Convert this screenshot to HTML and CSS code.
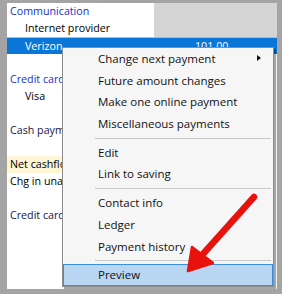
FILE: index.html
```html
<!DOCTYPE html>
<html>
<head>
<meta charset="utf-8">
<link rel="stylesheet" href="styles.css">
</head>
<body>
<div class="frame">
  <div class="window">
    <div class="top">
      <div class="col-left">
        <div class="row cat">Communication</div>
        <div class="row sub">Internet provider</div>
      </div>
      <div class="col-right"></div>
    </div>
    <div class="row selected">
      <span class="sel-name">Verizon</span>
      <span class="sel-amount">101.00</span>
    </div>
    <div class="col-left rest">
      <div class="row"></div>
      <div class="row cat">Credit card</div>
      <div class="row sub">Visa</div>
      <div class="row"></div>
      <div class="row navy">Cash payment</div>
      <div class="row"></div>
      <div class="row total">Net cashflow</div>
      <div class="row plain">Chg in unallocated</div>
      <div class="row"></div>
      <div class="row navy">Credit card</div>
    </div>

    <div class="menu">
      <div class="item">Change next payment<span class="caret"></span></div>
      <div class="item">Future amount changes</div>
      <div class="item">Make one online payment</div>
      <div class="item">Miscellaneous payments</div>
      <div class="sep"></div>
      <div class="item">Edit</div>
      <div class="item">Link to saving</div>
      <div class="sep"></div>
      <div class="item">Contact info</div>
      <div class="item">Ledger</div>
      <div class="item">Payment history</div>
      <div class="sep"></div>
      <div class="item hot">Preview</div>
    </div>
  </div>
  <svg class="annot" width="282" height="294" viewBox="0 0 282 294">
    <line x1="254" y1="197" x2="203" y2="254" stroke="#e8120c" stroke-width="6.5" stroke-linecap="round"/>
    <polygon points="188,271 192,247 213,263" fill="#e8120c" stroke="#e8120c" stroke-width="2.5" stroke-linejoin="round"/>
  </svg>
</div>
</body>
</html>
```
FILE: styles.css
```css
* { box-sizing: border-box; }
html, body { margin: 0; padding: 0; }
body {
  width: 282px;
  height: 294px;
  overflow: hidden;
  background: #a4a4a4;
  font-family: "Open Sans", "Noto Sans", sans-serif;
}
.frame {
  position: relative;
  width: 282px;
  height: 294px;
  padding: 3px 5px 5px 7px;
  background: #a4a4a4;
}
.window {
  position: relative;
  width: 270px;
  height: 286px;
  background: #ffffff;
  overflow: hidden;
}
.top {
  display: flex;
  height: 34px;
}
.col-left {
  width: 147px;
}
.col-right {
  flex: 1;
  background: #d4d4d4;
}
.row {
  height: 17px;
  line-height: 17px;
  font-size: 10.7px;
  padding-left: 3px;
  white-space: nowrap;
  overflow: hidden;
  color: #000;
}
.cat { color: #1b2fcf; }
.sub { padding-left: 18px; }
.navy { color: #16164a; }
.plain { color: #000; }
.total { background: #fdf5d3; }
.selected {
  display: flex;
  background: #0a76d8;
  border-top: 1px solid #8cc4f2;
  color: #fff;
  padding-left: 18px;
}
.sel-name { width: 170px; }
.sel-amount { color: #fff; }

.menu {
  position: absolute;
  left: 55px;
  top: 44px;
  width: 212px;
  height: 240px;
  background: #f6f6f6;
  border: 1px solid #8c8c8c;
  box-shadow: 2px 2px 1px rgba(0,0,0,0.35);
  font-family: "Open Sans", "Noto Sans", sans-serif;
  font-size: 11.5px;
  color: #111;
}
.item {
  position: relative;
  height: 21.7px;
  line-height: 20px;
  padding-left: 34px;
  border: 1px solid transparent;
  white-space: nowrap;
}
.item.hot {
  background: #b8d6f1;
  border-color: #3b8fe0;
}
.caret {
  position: absolute;
  right: 11px;
  top: 6px;
  width: 0;
  height: 0;
  border-top: 3.5px solid transparent;
  border-bottom: 3.5px solid transparent;
  border-left: 4px solid #111;
}
.sep {
  height: 7px;
  margin-left: 32px;
  margin-right: 2px;
  display: flex;
  align-items: center;
}
.sep::after {
  content: "";
  display: block;
  width: 100%;
  height: 1px;
  background: #c8c8c8;
}
.annot {
  position: absolute;
  left: 0;
  top: 0;
}
```
